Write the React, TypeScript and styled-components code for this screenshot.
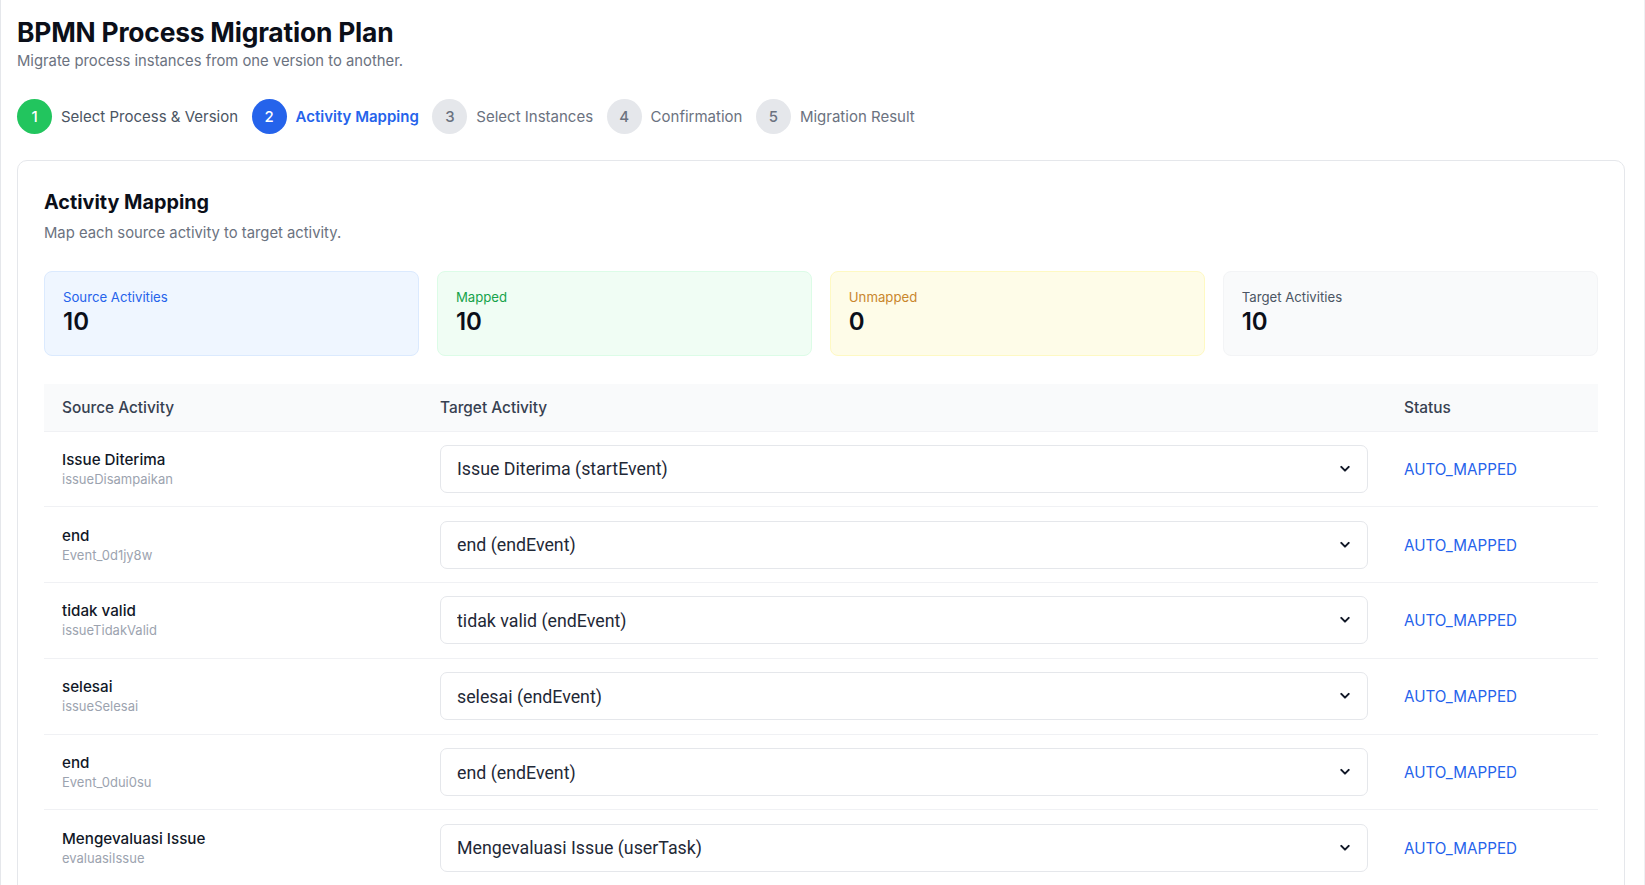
import React from 'react'
import styled, { createGlobalStyle, css } from 'styled-components'

type StepState = 'done' | 'active' | 'todo'
type Tone = 'blue' | 'green' | 'yellow' | 'gray'

const STEPS: { label: string; state: StepState }[] = [
  { label: 'Select Process & Version', state: 'done' },
  { label: 'Activity Mapping', state: 'active' },
  { label: 'Select Instances', state: 'todo' },
  { label: 'Confirmation', state: 'todo' },
  { label: 'Migration Result', state: 'todo' },
]

const STATS: { label: string; value: number; tone: Tone }[] = [
  { label: 'Source Activities', value: 10, tone: 'blue' },
  { label: 'Mapped', value: 10, tone: 'green' },
  { label: 'Unmapped', value: 0, tone: 'yellow' },
  { label: 'Target Activities', value: 10, tone: 'gray' },
]

const ROWS = [
  { name: 'Issue Diterima', id: 'issueDisampaikan', type: 'startEvent' },
  { name: 'end', id: 'Event_0d1jy8w', type: 'endEvent' },
  { name: 'tidak valid', id: 'issueTidakValid', type: 'endEvent' },
  { name: 'selesai', id: 'issueSelesai', type: 'endEvent' },
  { name: 'end', id: 'Event_0dui0su', type: 'endEvent' },
  { name: 'Mengevaluasi Issue', id: 'evaluasiIssue', type: 'userTask' },
  { name: 'Memperbaiki Issue', id: 'perbaikiIssue', type: 'userTask' },
  { name: 'Verifikasi Perbaikan', id: 'verifikasiPerbaikan', type: 'userTask' },
  { name: 'Issue Valid?', id: 'Gateway_1k2m9xz', type: 'exclusiveGateway' },
  { name: 'Perbaikan OK?', id: 'Gateway_0q7wr3n', type: 'exclusiveGateway' },
]

const TONES: Record<Tone, { bg: string; border: string; label: string }> = {
  blue: { bg: '#eff6ff', border: '#dbeafe', label: '#2563eb' },
  green: { bg: '#f0fdf4', border: '#dcfce7', label: '#16a34a' },
  yellow: { bg: '#fefce8', border: '#fef9c3', label: '#c9862c' },
  gray: { bg: '#f9fafb', border: '#f3f4f6', label: '#4b5563' },
}

const GlobalStyle = createGlobalStyle`
  * { box-sizing: border-box; }
  body {
    margin: 0;
    background: #ffffff;
    font-family: Inter, "Noto Sans", sans-serif;
    color: #111827;
  }
`

export default function App() {
  return (
    <>
      <GlobalStyle />
      <Page>
        <Title>BPMN Process Migration Plan</Title>
        <Subtitle>Migrate process instances from one version to another.</Subtitle>

        <Stepper>
          {STEPS.map((step, i) => (
            <Step key={step.label}>
              <StepCircle $state={step.state}>{i + 1}</StepCircle>
              <StepLabel $state={step.state}>{step.label}</StepLabel>
            </Step>
          ))}
        </Stepper>

        <Card>
          <CardTitle>Activity Mapping</CardTitle>
          <CardDesc>Map each source activity to target activity.</CardDesc>

          <StatGrid>
            {STATS.map((s) => (
              <StatCard key={s.label} $tone={s.tone}>
                <StatLabel $tone={s.tone}>{s.label}</StatLabel>
                <StatValue>{s.value}</StatValue>
              </StatCard>
            ))}
          </StatGrid>

          <Table>
            <colgroup>
              <col style={{ width: 378 }} />
              <col />
              <col style={{ width: 212 }} />
            </colgroup>
            <thead>
              <tr>
                <HeadCell>Source Activity</HeadCell>
                <HeadCell>Target Activity</HeadCell>
                <HeadCell>Status</HeadCell>
              </tr>
            </thead>
            <tbody>
              {ROWS.map((row) => {
                const value = `${row.name} (${row.type})`
                return (
                  <Row key={row.id}>
                    <Cell>
                      <ActivityName>{row.name}</ActivityName>
                      <ActivityId>{row.id}</ActivityId>
                    </Cell>
                    <Cell>
                      <SelectWrap>
                        <Select defaultValue={value}>
                          {ROWS.map((opt) => (
                            <option key={opt.id} value={`${opt.name} (${opt.type})`}>
                              {opt.name} ({opt.type})
                            </option>
                          ))}
                        </Select>
                        <Chevron width='10' height='7' viewBox='0 0 10 7'>
                          <path
                            d='M1.3 1.4L5 5.1l3.7-3.7'
                            fill='none'
                            stroke='#111827'
                            strokeWidth='2'
                            strokeLinecap='round'
                            strokeLinejoin='round'
                          />
                        </Chevron>
                      </SelectWrap>
                    </Cell>
                    <Cell>
                      <Status>AUTO_MAPPED</Status>
                    </Cell>
                  </Row>
                )
              })}
            </tbody>
          </Table>
        </Card>
      </Page>
    </>
  )
}

const Page = styled.div`
  min-height: 100vh;
  padding: 15px 19px 40px 16px;
  border-left: 1px solid #e5e7eb;
  border-right: 1px solid #eef0f3;
`

const Title = styled.h1`
  margin: 0;
  font-size: 26.4px;
  line-height: 35px;
  font-weight: 700;
  color: #0b0f19;
  letter-spacing: -0.2px;
`

const Subtitle = styled.p`
  margin: 0;
  font-size: 14.8px;
  line-height: 22px;
  color: #6b7280;
`

const Stepper = styled.div`
  display: flex;
  align-items: center;
  gap: 13.5px;
  margin-top: 27px;
`

const Step = styled.div`
  display: flex;
  align-items: center;
  gap: 9px;
`

const circleColors = {
  done: css`
    background: #22c55e;
    color: #ffffff;
  `,
  active: css`
    background: #2563eb;
    color: #ffffff;
  `,
  todo: css`
    background: #e5e7eb;
    color: #6b7280;
  `,
}

const StepCircle = styled.div<{ $state: StepState }>`
  width: 35px;
  height: 35px;
  border-radius: 50%;
  display: flex;
  align-items: center;
  justify-content: center;
  font-size: 15px;
  font-weight: 500;
  ${(p) => circleColors[p.$state]}
`

const StepLabel = styled.span<{ $state: StepState }>`
  font-size: 15px;
  line-height: 22px;
  font-weight: ${(p) => (p.$state === 'active' ? 600 : 400)};
  color: ${(p) => (p.$state === 'active' ? '#2563eb' : p.$state === 'done' ? '#4b5563' : '#6b7280')};
`

const Card = styled.div`
  margin-top: 26px;
  border: 1px solid #e5e7eb;
  border-radius: 10px;
  padding: 27px 26px 26px;
  background: #ffffff;
`

const CardTitle = styled.h2`
  margin: 0;
  font-size: 19.8px;
  line-height: 28px;
  font-weight: 700;
  color: #0b0f19;
`

const CardDesc = styled.p`
  margin: 6px 0 0;
  font-size: 14.8px;
  line-height: 22px;
  color: #6b7280;
`

const StatGrid = styled.div`
  display: grid;
  grid-template-columns: repeat(4, 1fr);
  gap: 17.6px;
  margin-top: 27px;
`

const StatCard = styled.div<{ $tone: Tone }>`
  height: 85px;
  padding: 17px 18px;
  border-radius: 8px;
  background: ${(p) => TONES[p.$tone].bg};
  border: 1px solid ${(p) => TONES[p.$tone].border};
`

const StatLabel = styled.div<{ $tone: Tone }>`
  font-size: 13.2px;
  line-height: 17px;
  color: ${(p) => TONES[p.$tone].label};
`

const StatValue = styled.div`
  margin-top: 1px;
  font-size: 24px;
  line-height: 30px;
  font-weight: 600;
  color: #0b0f19;
`

const Table = styled.table`
  width: 100%;
  margin-top: 28px;
  border-collapse: collapse;
  table-layout: fixed;
`

const HeadCell = styled.th`
  height: 47px;
  padding: 0 18px;
  text-align: left;
  background: #f9fafb;
  border-bottom: 1px solid #f0f1f4;
  font-size: 15.4px;
  font-weight: 500;
  color: #374151;
`

const Row = styled.tr`
  border-bottom: 1px solid #f0f1f4;
`

const Cell = styled.td`
  height: 75.8px;
  padding: 0 18px;
  vertical-align: middle;
`

const ActivityName = styled.div`
  font-size: 15.2px;
  line-height: 20px;
  font-weight: 500;
  color: #111827;
`

const ActivityId = styled.div`
  font-size: 13px;
  line-height: 18px;
  color: #9ca3af;
`

const SelectWrap = styled.div`
  position: relative;
  width: 100%;
`

const Select = styled.select`
  width: 100%;
  height: 48px;
  padding: 0 40px 0 16px;
  border: 1px solid #e5e7eb;
  border-radius: 7px;
  background: #ffffff;
  appearance: none;
  font-family: Roboto, "Liberation Sans", sans-serif;
  font-size: 17.8px;
  color: #1f2937;
  outline: none;
`

const Chevron = styled.svg`
  position: absolute;
  right: 18px;
  top: 50%;
  transform: translateY(-50%);
  pointer-events: none;
`

const Status = styled.span`
  font-size: 15.2px;
  color: #2563eb;
`
